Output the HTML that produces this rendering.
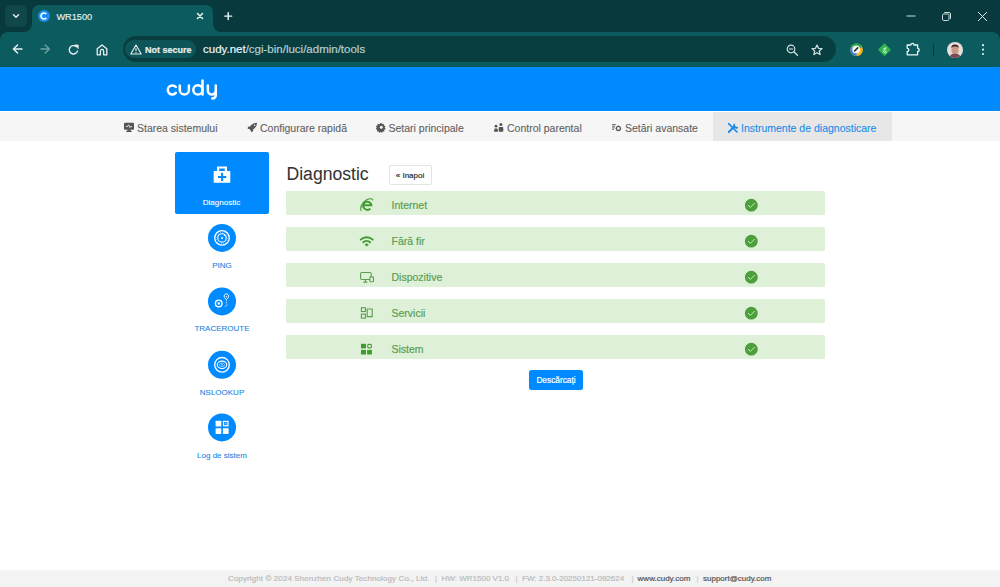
<!DOCTYPE html>
<html><head><meta charset="utf-8">
<style>
*{box-sizing:border-box;margin:0;padding:0}
html,body{width:1000px;height:587px;overflow:hidden;background:#fff;font-family:"Liberation Sans",sans-serif;-webkit-text-stroke-width:0.2px}
.abs{position:absolute}
svg{position:absolute;overflow:visible}
#strip{left:0;top:0;width:1000px;height:40px;background:#08393c}
#toolbar{left:0;top:32px;width:1000px;height:36px;background:#0c5b5f;border-radius:8px 8px 0 0}
#tab{left:32px;top:5px;width:181px;height:30px;background:#0c5b5f;border-radius:7px 7px 0 0}
#ddbtn{left:5px;top:5px;width:22px;height:22px;background:#10484a;border-radius:6px}
#omni{left:123px;top:36px;width:713px;height:26px;background:#093e41;border-radius:13px}
#chip{left:125px;top:40px;width:71px;height:18px;background:#0d5558;border-radius:9px}
.wt{color:#e6f2f2}
#header{left:0;top:67px;width:1000px;height:44px;background:#008aff}
#nav{left:0;top:112px;width:1000px;height:29px;background:#f6f6f6}
.navi{position:absolute;top:113px;height:30px;line-height:30px;font-size:10.5px;color:#616161;-webkit-text-stroke-width:0.1px;white-space:nowrap}
#footer{left:0;top:570px;width:1000px;height:17px;background:#f3f3f3;font-size:8px;color:#bbb;line-height:18px;white-space:nowrap}
.side{font-size:8px;line-height:11px;text-align:center;color:#2386e2;white-space:nowrap;-webkit-text-stroke-width:0.1px}
.row{position:absolute;left:286px;width:539px;height:23.5px;background:#dff0d8;border-radius:1.5px}
.rt{position:absolute;left:391.5px;height:23.5px;line-height:28px;font-size:10.5px;color:#5c9f54;white-space:nowrap}
.pipe{position:absolute;color:#ccc}
</style></head><body>
<!-- BROWSER CHROME -->
<div id="strip" class="abs"></div>
<div id="toolbar" class="abs"></div>
<div id="tab" class="abs"></div>
<!-- concave bottom corners of tab -->
<svg style="left:24px;top:24px" width="8" height="8"><path d="M8 0 V8 H0 A8 8 0 0 0 8 0Z" fill="#0c5b5f"/></svg>
<svg style="left:213px;top:24px" width="8" height="8"><path d="M0 0 V8 H8 A8 8 0 0 1 0 0Z" fill="#0c5b5f"/></svg>
<div id="ddbtn" class="abs"></div>
<svg style="left:11px;top:11px" width="10" height="10"><path d="M2.5 3.8 L5 6.2 L7.5 3.8" stroke="#e8f0f0" stroke-width="1.4" fill="none" stroke-linecap="round" stroke-linejoin="round"/></svg>
<svg style="left:38px;top:10px" width="12" height="12"><circle cx="6" cy="6" r="6" fill="#1a8cf0"/><path d="M8.3 4.1 A3 3 0 1 0 8.3 7.9" stroke="#fff" stroke-width="1.6" fill="none"/></svg>
<div class="abs wt" style="left:56.4px;top:10.5px;font-size:9.2px;line-height:12px;-webkit-text-stroke:0.15px #e6f2f2">WR1500</div>
<svg style="left:196px;top:12px" width="8" height="8"><path d="M1.5 1.5 L6.5 6.5 M6.5 1.5 L1.5 6.5" stroke="#eef5f5" stroke-width="1.45" stroke-linecap="round"/></svg>
<svg style="left:223px;top:11px" width="10" height="10"><path d="M5.2 1.6 V8.6 M1.7 5.1 H8.7" stroke="#eef5f5" stroke-width="1.45" stroke-linecap="round"/></svg>
<!-- window controls -->
<svg style="left:906px;top:15px" width="10" height="2"><path d="M0.5 1 H9.5" stroke="#cfdcdc" stroke-width="1"/></svg>
<svg style="left:941px;top:11px" width="11" height="11"><rect x="1.5" y="3" width="6.5" height="6.5" rx="1.3" stroke="#cfdcdc" stroke-width="1" fill="none"/><path d="M3.2 1.5 H8 A1.5 1.5 0 0 1 9.5 3 V7.8" stroke="#cfdcdc" stroke-width="1" fill="none"/></svg>
<svg style="left:977px;top:11px" width="11" height="11"><path d="M1 1 L10 10 M10 1 L1 10" stroke="#e0eaea" stroke-width="1"/></svg>
<!-- nav buttons -->
<svg style="left:12px;top:44px" width="11" height="11"><path d="M10 5 H1.4 M5.6 0.9 L1.4 5 L5.6 9.1" stroke="#e8f0f0" stroke-width="1.45" fill="none" stroke-linecap="round" stroke-linejoin="round"/></svg>
<svg style="left:40px;top:44px" width="11" height="11"><path d="M1 5 H9.4 M5.2 0.9 L9.4 5 L5.2 9.1" stroke="#6f9e9f" stroke-width="1.45" fill="none" stroke-linecap="round" stroke-linejoin="round"/></svg>
<svg style="left:68px;top:43.5px" width="12" height="12"><path d="M9.6 6.5 A4.2 4.2 0 1 1 8.2 2.6" stroke="#e8f0f0" stroke-width="1.4" fill="none"/><path d="M6.6 1 H10.2 V4.6 Z" fill="#e8f0f0" stroke="#e8f0f0" stroke-width="0.8" stroke-linejoin="round"/></svg>
<svg style="left:96px;top:43.5px" width="12" height="12"><path d="M1.2 10.8 V4.8 L6 1 L10.8 4.8 V10.8 H7.6 V7 A1.6 1.6 0 0 0 4.4 7 V10.8 Z" stroke="#e8f0f0" stroke-width="1.3" fill="none" stroke-linejoin="round"/></svg>
<div id="omni" class="abs"></div>
<div id="chip" class="abs"></div>
<svg style="left:130px;top:43.5px" width="12" height="11"><path d="M6 1 L11.2 10 H0.8 Z" stroke="#e8f0f0" stroke-width="1.1" fill="none" stroke-linejoin="round"/><path d="M6 4.2 V7" stroke="#e8f0f0" stroke-width="1.1"/><circle cx="6" cy="8.4" r="0.6" fill="#e8f0f0"/></svg>
<div class="abs wt" style="left:145px;top:44px;font-size:9px;line-height:12px;font-weight:bold;color:#e8f0f0">Not secure</div>
<div class="abs" style="left:203px;top:42px;font-size:11.5px;line-height:14px;color:#b6cfd0;white-space:nowrap"><span style="color:#eef5f5">cudy.net</span>/cgi-bin/luci/admin/tools</div>
<svg style="left:786px;top:44px" width="13" height="12"><circle cx="5" cy="5" r="3.8" stroke="#d5e2e2" stroke-width="1.2" fill="none"/><path d="M3 5 H7" stroke="#d5e2e2" stroke-width="1.1"/><path d="M7.8 7.8 L11.5 11.3" stroke="#d5e2e2" stroke-width="1.3" stroke-linecap="round"/></svg>
<svg style="left:811px;top:43.5px" width="12" height="12"><path d="M6 1 L7.5 4.3 L11 4.6 L8.3 7 L9.1 10.6 L6 8.7 L2.9 10.6 L3.7 7 L1 4.6 L4.5 4.3 Z" stroke="#d5e2e2" stroke-width="1.2" fill="none" stroke-linejoin="round"/></svg>
<!-- extensions -->
<svg style="left:850px;top:43px" width="14" height="14"><circle cx="6.6" cy="6.8" r="6.3" fill="#f6b81e"/><path d="M6.6 13.1 A6.3 6.3 0 0 1 1.1 3.7 L6.6 6.8Z" fill="#3f7fe6"/><path d="M1.1 3.7 A6.3 6.3 0 0 1 12.2 4 L6.6 6.8Z" fill="#2aa34f"/><circle cx="6.2" cy="6.4" r="3.9" fill="#f4f4f4"/><path d="M4.7 7.9 L7.7 4.9" stroke="#2a2a2a" stroke-width="1.5" stroke-linecap="round"/></svg>
<svg style="left:878px;top:43px" width="14" height="14"><path d="M6.5 1.2 L12 6.7 L6.5 12.2 L1 6.7 Z" fill="#2fb34f" stroke="#2fb34f" stroke-width="1.6" stroke-linejoin="round"/><path d="M5 8.9 L8.2 4.9 M5.6 6.3 L7 4.6 M6.3 9.6 L8 7.6 M7.2 10.4 L8.4 9" stroke="#d9ffd9" stroke-width="1" fill="none" stroke-linecap="round"/></svg>
<svg style="left:906px;top:42px" width="15" height="14"><path d="M1.2 3 H4.8 A1.6 1.6 0 0 1 8 3 H11.6 V6.3 A1.6 1.6 0 0 1 11.6 9.5 V12.8 H1.2 V9.5 A1.6 1.6 0 0 0 1.2 6.3 Z" stroke="#eef6f6" stroke-width="1.3" fill="none" stroke-linejoin="round"/></svg>
<div class="abs" style="left:933px;top:43.5px;width:1px;height:12px;background:#0a3a3c"></div>
<svg style="left:947px;top:41.5px" width="16" height="16"><defs><clipPath id="av"><circle cx="8" cy="8" r="8"/></clipPath></defs><g clip-path="url(#av)"><rect width="16" height="16" fill="#e9dcdc"/><ellipse cx="8" cy="8" rx="3.6" ry="4.4" fill="#c99a86"/><path d="M4.2 6 Q4.5 2.4 8 2.6 Q11.8 2.6 11.7 6 Q10.5 4.5 8 4.6 Q5.6 4.6 4.2 6Z" fill="#3b2a26"/><path d="M2.5 16 Q3 11.5 8 11.8 Q13 11.5 13.5 16Z" fill="#7a4a52"/></g></svg>
<svg style="left:981px;top:44px" width="4" height="12"><circle cx="2" cy="1.2" r="1.1" fill="#e8f0f0"/><circle cx="2" cy="5.6" r="1.1" fill="#e8f0f0"/><circle cx="2" cy="10" r="1.1" fill="#e8f0f0"/></svg>

<!-- CUDY HEADER -->
<div id="header" class="abs"></div>
<svg style="left:0;top:0" width="1000" height="120"><g stroke="#fff" stroke-width="2.5" fill="none" stroke-linecap="round">
<path d="M175.8 87.03 A4.55 4.55 0 1 0 175.8 92.87"/>
<path d="M179.8 85.4 V89.95 A4.55 4.55 0 0 0 188.9 89.95 V85.4"/>
<circle cx="197.9" cy="89.95" r="4.6"/><path d="M202.5 80.6 V94.4"/>
<path d="M207.85 85.4 V90.5 A3.95 3.95 0 0 0 215.75 90.5 V85.4 M215.75 90 V95.5 A3.6 3.6 0 0 1 212.3 98.5"/>
</g></svg>
<div id="nav" class="abs"></div>
<div class="abs" style="left:712.5px;top:112px;width:179.5px;height:29px;background:#e7e7e7"></div>
<div class="navi" style="left:137px">Starea sistemului</div>
<div class="navi" style="left:260px">Configurare rapidă</div>
<div class="navi" style="left:388.5px">Setari principale</div>
<div class="navi" style="left:507px">Control parental</div>
<div class="navi" style="left:625px">Setări avansate</div>
<div class="navi" style="left:741px;color:#1a8be8">Instrumente de diagnosticare</div>
<!-- nav icons -->
<svg style="left:0;top:0" width="1000" height="140">
<g fill="#555">
<rect x="124" y="122.8" width="10" height="6.9" rx="1"/><path d="M127.6 129.5 H130.4 L131 131.2 H132 V132 H126 V131.2 H127 Z"/>
<path d="M125.8 126.6 H127.5 L128.6 124.8 L130 127.6 L130.8 126.4 H132.2" stroke="#fff" stroke-width="0.8" fill="none"/>
<path d="M257 122.8 C254 122.8 251.8 124.3 250 126.5 L248 126.7 L247.6 128.8 L249.3 128.9 L250.8 130.4 L250.9 132 L253 131.6 L253.2 129.6 C255.5 127.8 257 125.8 257 122.8Z"/>
<circle cx="254.6" cy="125.2" r="0.8" fill="#f5f5f5"/>
<path d="M381.3 122.8 l0.9 1.5 l1.6 -0.5 l0.1 1.7 l1.6 0.6 l-0.8 1.5 l1 1.3 l-1.5 0.8 l0.2 1.7 l-1.7 0 l-0.7 1.5 l-1.3 -1.1 l-1.3 1.1 l-0.7 -1.5 l-1.7 0 l0.2 -1.7 l-1.5 -0.8 l1 -1.3 l-0.8 -1.5 l1.6 -0.6 l0.1 -1.7 l1.6 0.5 Z"/>
<circle cx="381.3" cy="127.3" r="1.5" fill="#f5f5f5"/>
<circle cx="496" cy="126.2" r="1.4"/><path d="M494.1 131.8 V130.2 A1.9 1.9 0 0 1 497.9 130.2 V131.8Z"/>
<circle cx="500.9" cy="124.6" r="1.5"/><rect x="498.7" y="127" width="4.6" height="4.8" rx="0.8"/>
<rect x="612" y="124.2" width="3.8" height="1.1"/><rect x="612" y="126.4" width="3" height="1.1"/><rect x="612" y="128.6" width="2.2" height="1.1"/>
</g>
<circle cx="618.4" cy="128.4" r="2" stroke="#555" stroke-width="1.2" fill="none"/>
<path d="M618.4 125.6 V126.3 M618.4 130.5 V131.2 M615.6 128.4 H616.3 M620.5 128.4 H621.2" stroke="#555" stroke-width="1"/>
<g stroke="#1a8be8" stroke-linecap="round" fill="none">
<path d="M728.6 123.6 L737 132" stroke-width="1.6"/>
<path d="M728.8 132 L734 126.8" stroke-width="2"/>
<path d="M734.2 124.6 A2.4 2.4 0 0 0 737.2 127.6" stroke-width="1.8"/>
</g>
</svg>

<!-- SIDEBAR -->
<div class="abs" style="left:175px;top:152px;width:93.5px;height:62px;background:#008aff;border-radius:2px"></div>
<svg style="left:0;top:0" width="300" height="470">
<g fill="#fff">
<path d="M217 166.6 H227 V171 H224.8 V168.5 H219.2 V171 H217Z"/>
<rect x="213.7" y="171" width="16.6" height="11.8" rx="0.6"/>
</g>
<path d="M218 176.9 H226.2 M222.1 172.7 V181" stroke="#008aff" stroke-width="2"/>
<g fill="#008aff"><circle cx="222" cy="237.9" r="14"/><circle cx="222" cy="301.4" r="14"/><circle cx="222" cy="364.8" r="14"/><circle cx="222" cy="427.4" r="14"/></g>
<g stroke="#fff" fill="none">
<circle cx="222" cy="237.9" r="7.3" stroke-width="1.3"/><circle cx="222" cy="237.9" r="4.2" stroke-width="1.1"/>
<circle cx="222" cy="237.9" r="5.75" stroke-width="0.7" stroke-dasharray="1 1.2" opacity="0.6"/>
<circle cx="222" cy="237.9" r="1" fill="#fff" stroke="none"/><circle cx="224.6" cy="235.3" r="0.8" fill="#fff" stroke="none"/>
<circle cx="218.7" cy="303.4" r="3.3" stroke-width="1.4"/>
<path d="M226.4 299.6 L224.6 297.6 A2.3 2.3 0 1 1 228.2 297.6 Z" stroke-width="0.9" stroke-linejoin="round"/>
<path d="M226.4 300.2 V303.5 Q227.4 305 226.4 306.3 H224" stroke-width="0.8" stroke-dasharray="1 0.7"/>
<circle cx="222" cy="364.8" r="7.3" stroke-width="1.3"/>
<ellipse cx="222" cy="364.8" rx="4.8" ry="3.7" stroke-width="1.1"/>
<ellipse cx="222" cy="364.8" rx="2.6" ry="1.8" stroke-width="0.8" opacity="0.6"/>
</g>
<rect x="217.6" y="302.3" width="2.2" height="2.2" fill="#fff"/>
<circle cx="226.4" cy="296.6" r="0.7" fill="#fff"/>
<circle cx="222" cy="364.8" r="0.7" fill="#fff"/>
<g fill="#fff"><rect x="215.6" y="420.8" width="5.7" height="5.6" rx="0.4"/><rect x="215.6" y="428.2" width="5.7" height="5.7" rx="0.4"/><rect x="222.9" y="428.2" width="5.7" height="5.7" rx="0.4"/></g>
<rect x="223.5" y="421.4" width="4.5" height="4.4" stroke="#fff" stroke-width="1.2" fill="none"/><rect x="224.9" y="422.8" width="1.7" height="1.6" fill="#fff" opacity="0.5"/>
</svg>
<div class="abs side" style="left:175px;top:196.5px;width:93px;color:#fff">Diagnostic</div>
<div class="abs side" style="left:172px;top:260.2px;width:100px">PING</div>
<div class="abs side" style="left:172px;top:323px;width:100px">TRACEROUTE</div>
<div class="abs side" style="left:172px;top:386.5px;width:100px">NSLOOKUP</div>
<div class="abs side" style="left:172px;top:450px;width:100px">Log de sistem</div>

<!-- CONTENT -->
<div class="abs" style="left:286.5px;top:163px;font-size:17.6px;line-height:22px;color:#333;-webkit-text-stroke-width:0.05px">Diagnostic</div>
<div class="abs" style="left:388.5px;top:165.4px;width:43px;height:19.2px;border:1px solid #e4e4e4;border-radius:2px;font-size:8px;line-height:19px;text-align:center;color:#333">« Inapoi</div>
<div class="row" style="top:191px"></div>
<div class="row" style="top:227px"></div>
<div class="row" style="top:263px"></div>
<div class="row" style="top:299px"></div>
<div class="row" style="top:335px"></div>
<div class="rt" style="top:191px">Internet</div>
<div class="rt" style="top:227px">Fără fir</div>
<div class="rt" style="top:263px">Dispozitive</div>
<div class="rt" style="top:299px">Servicii</div>
<div class="rt" style="top:335px">Sistem</div>
<svg style="left:0;top:0" width="1000" height="400">
<g fill="#4c9f3a">
<circle cx="751.3" cy="205.2" r="6.4"/><circle cx="751.3" cy="241.2" r="6.4"/><circle cx="751.3" cy="277.2" r="6.4"/><circle cx="751.3" cy="313.2" r="6.4"/><circle cx="751.3" cy="349.2" r="6.4"/>
</g>
<g stroke="#c4ecb8" stroke-width="1" fill="none" stroke-linecap="round" stroke-linejoin="round">
<path d="M748.3 205.4 L750.4 207.4 L754.4 203.3"/><path d="M748.3 241.4 L750.4 243.4 L754.4 239.3"/><path d="M748.3 277.4 L750.4 279.4 L754.4 275.3"/><path d="M748.3 313.4 L750.4 315.4 L754.4 311.3"/><path d="M748.3 349.4 L750.4 351.4 L754.4 347.3"/>
</g>
<!-- IE -->
<g fill="none" stroke="#3f9a2f">
<path d="M363.5 205.3 H371.4 A4.1 4.1 0 1 0 370.3 208.6" stroke-width="2"/>
<path d="M361.4 211 C359.4 208.6 362 202.6 366.3 200.1 C369.6 198.2 372.6 198.5 372.9 200.3" stroke-width="1.1"/>
</g>
<!-- wifi -->
<g fill="none" stroke="#3f9a2f" stroke-width="1.9" stroke-linecap="round">
<path d="M360.7 239.6 A8.8 8.8 0 0 1 372.7 239.6"/>
<path d="M363.3 242.3 A5 5 0 0 1 370.1 242.3"/>
</g>
<path d="M364.6 244.5 A3 3 0 0 1 368.8 244.5 L366.7 246.6Z" fill="#3f9a2f"/>
<!-- devices -->
<g fill="none" stroke="#5a9e4c" stroke-width="1.1">
<rect x="360.6" y="272.5" width="10.6" height="7" rx="1.2"/>
<path d="M365.4 279.5 V281.8 M363.4 282.1 H367.4"/>
<rect x="369.9" y="276.9" width="3.6" height="4.9" rx="0.9" fill="#dff0d8"/>
</g>
<!-- services -->
<g fill="none" stroke="#5a9e4c" stroke-width="1.1">
<rect x="361.4" y="307.7" width="4" height="3.8"/><rect x="361.4" y="314.1" width="4" height="4"/>
<path d="M367.2 309 H372.2 V316.6 H367.2 M367.2 308.4 V317.2"/>
</g>
<!-- system -->
<g fill="#3f9a2f"><rect x="361" y="343.8" width="5" height="4.6"/><rect x="361" y="349.9" width="5" height="4.6"/><rect x="367.1" y="349.9" width="4.8" height="4.6"/></g>
<rect x="367.7" y="344.35" width="3.7" height="3.5" rx="1" stroke="#4a9c3a" stroke-width="1.1" fill="none"/>
</svg>
<div class="abs" style="left:529.2px;top:370.2px;width:53.6px;height:19.4px;background:#008aff;border-radius:2.5px;color:#fff;font-size:8.3px;line-height:20.6px;text-align:center">Descărcați</div>

<!-- FOOTER -->
<div id="footer" class="abs"><span style="position:absolute;left:228px;top:0;letter-spacing:0.1px">Copyright © 2024 Shenzhen Cudy Technology Co., Ltd.</span>
<span class="pipe" style="left:435px">|</span>
<span style="position:absolute;left:441.6px">HW: WR1500 V1.0</span>
<span class="pipe" style="left:515.5px">|</span>
<span style="position:absolute;left:522px">FW: 2.3.0-20250121-092624</span>
<span class="pipe" style="left:631.5px">|</span>
<span style="position:absolute;left:637.6px;color:#555">www.cudy.com</span>
<span class="pipe" style="left:696.5px">|</span>
<span style="position:absolute;left:703px;color:#555">support@cudy.com</span>
</div>
</body></html>
